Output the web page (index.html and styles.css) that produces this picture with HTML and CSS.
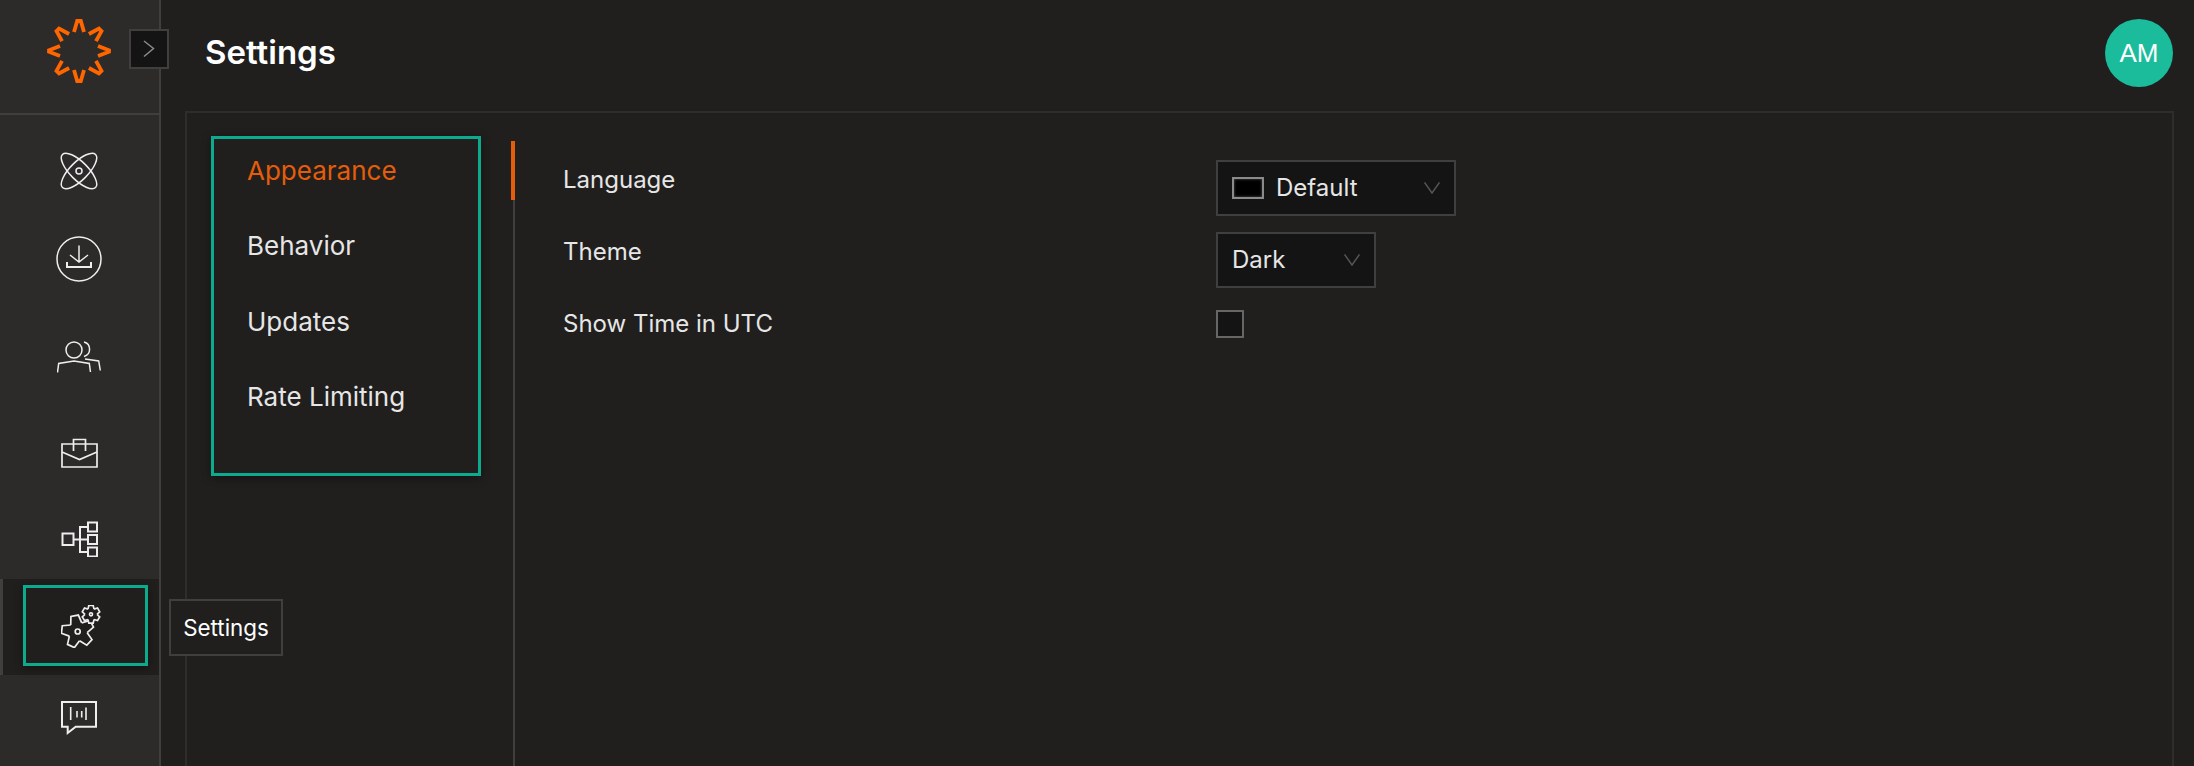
FILE: index.html
```html
<!DOCTYPE html>
<html lang="en">
<head>
<meta charset="utf-8">
<title>Settings</title>
<link rel="stylesheet" href="styles.css">
</head>
<body>
<div class="app">
  <aside class="rail">
    <div class="rail-top">
      <svg class="logo" width="64" height="64" viewBox="-32 -32 64 64" fill="none" stroke="#ff6600" stroke-width="3.8" stroke-linejoin="miter">
        <path d="M-5 -19 L-1.800 -30 L1.800 -30 L5 -19"/>
        <path d="M-5 -19 L-1.800 -30 L1.800 -30 L5 -19" transform="rotate(45)"/>
        <path d="M-5 -19 L-0.800 -30 L0.800 -30 L5 -19" transform="rotate(90)"/>
        <path d="M-5 -19 L-1.800 -30 L1.800 -30 L5 -19" transform="rotate(135)"/>
        <path d="M-5 -19 L-1.800 -30 L1.800 -30 L5 -19" transform="rotate(180)"/>
        <path d="M-5 -19 L-1.800 -30 L1.800 -30 L5 -19" transform="rotate(225)"/>
        <path d="M-5 -19 L-0.800 -30 L0.800 -30 L5 -19" transform="rotate(270)"/>
        <path d="M-5 -19 L-1.800 -30 L1.800 -30 L5 -19" transform="rotate(315)"/>
      </svg>
    </div>
    <nav class="rail-nav">
      <div class="rail-item item-atom">
        <svg class="icon" width="38" height="38" viewBox="-19 -19 38 38" fill="none" stroke="#eeeeee" stroke-width="1.500">
          <ellipse rx="9" ry="23.400" transform="rotate(45)"/>
          <ellipse rx="9" ry="23.400" transform="rotate(-45)"/>
          <circle r="3"/>
        </svg>
      </div>
      <div class="rail-item item-download">
        <svg class="icon" width="46" height="46" viewBox="0 0 46 46" fill="none" stroke="#eeeeee" stroke-width="1.500">
          <circle cx="23" cy="23" r="22"/>
          <path d="M23 9.500V26M14 19L23 26L32 19"/>
          <path d="M11 26V31H35V26" stroke-width="2"/>
        </svg>
      </div>
      <div class="rail-item item-people">
        <svg class="icon" width="44" height="32" viewBox="0 0 44 32" fill="none" stroke="#eeeeee" stroke-width="1.500">
          <circle cx="17" cy="9" r="8"/>
          <path d="M27 1A7.500 7.500 0 0 1 27 15.500"/>
          <path d="M.5 31.500L1.700 22.500L17 20L32.300 22.500L33.500 31"/>
          <path d="M28 18L41.700 20L43.300 29.500"/>
        </svg>
      </div>
      <div class="rail-item item-case">
        <svg class="icon" width="37" height="30" viewBox="0 0 37 30" fill="none" stroke="#eeeeee" stroke-width="1.700">
          <path d="M1 6H36V29H1Z"/>
          <path d="M1 14L18.500 21.500L36 14"/>
          <path d="M12.500 13V1.500H24.500V13"/>
        </svg>
      </div>
      <div class="rail-item item-tree">
        <svg class="icon" width="37" height="36" viewBox="0 0 37 36" fill="none" stroke="#eeeeee" stroke-width="2">
          <rect x="1.500" y="12.500" width="11" height="11.500"/>
          <rect x="27" y="1.500" width="9" height="9"/>
          <rect x="27" y="14" width="9" height="9"/>
          <rect x="27" y="26.500" width="9" height="9"/>
          <path d="M12.500 18.500H27M19 6H27M19 31H27M19 5V32"/>
        </svg>
      </div>
      <div class="rail-active">
        <div class="focus-box">
          <svg class="icon" width="40" height="43" viewBox="0 0 40 43" fill="#201f1e" stroke="#eeeeee" stroke-width="1.700" stroke-linejoin="miter">
            <g transform="translate(16.700 26.500) rotate(-11)">
              <circle r="9" stroke="none"/>
              <path d="M-5.600 -7.700L-3.800 -16L3.800 -16L5.600 -7.700"/>
              <path d="M-5.600 -7.700L-3.800 -16L3.800 -16L5.600 -7.700" transform="rotate(72)"/>
              <path d="M-5.600 -7.700L-3.800 -16L3.800 -16L5.600 -7.700" transform="rotate(144)"/>
              <path d="M-5.600 -7.700L-3.800 -16L3.800 -16L5.600 -7.700" transform="rotate(216)"/>
              <path d="M-5.600 -7.700L-3.800 -16L3.800 -16L5.600 -7.700" transform="rotate(288)"/>
            </g>
            <circle cx="16.700" cy="26.500" r="2.500" fill="none"/>
            <g transform="translate(30 9.300)">
              <circle r="6" stroke="none"/>
              <path d="M-3 -5.200L-2.200 -8.800L2.200 -8.800L3 -5.200"/>
              <path d="M-3 -5.200L-2.200 -8.800L2.200 -8.800L3 -5.200" transform="rotate(60)"/>
              <path d="M-3 -5.200L-2.200 -8.800L2.200 -8.800L3 -5.200" transform="rotate(120)"/>
              <path d="M-3 -5.200L-2.200 -8.800L2.200 -8.800L3 -5.200" transform="rotate(180)"/>
              <path d="M-3 -5.200L-2.200 -8.800L2.200 -8.800L3 -5.200" transform="rotate(240)"/>
              <path d="M-3 -5.200L-2.200 -8.800L2.200 -8.800L3 -5.200" transform="rotate(300)"/>
              <circle r="1.500"/>
            </g>
          </svg>
        </div>
      </div>
      <div class="rail-item item-feedback">
        <svg class="icon" width="38" height="36" viewBox="0 0 38 36" fill="none" stroke="#eeeeee" stroke-width="2">
          <path d="M2 2H36V26.700H15.700L7.700 33V26.700H2Z"/>
          <path d="M10.700 7V20M17 11V17.500M21.700 11V17.500M26 7.500V20" stroke-width="1.600"/>
        </svg>
      </div>
    </nav>
  </aside>
  <button class="collapse" type="button" aria-label="Expand">
    <svg width="12" height="18" viewBox="0 0 12 18" fill="none" stroke="#8a8a8a" stroke-width="1.500"><path d="M1 1L10.500 8.500L1 16.500"/></svg>
  </button>
  <div class="tooltip">Settings</div>
  <main class="main">
    <header class="topbar">
      <h1 class="title">Settings</h1>
      <div class="avatar">AM</div>
    </header>
    <section class="panel">
      <div class="tabs">
        <div class="tab tab-on">Appearance</div>
        <div class="tab">Behavior</div>
        <div class="tab">Updates</div>
        <div class="tab">Rate Limiting</div>
      </div>
      <div class="content">
        <div class="marker"></div>
        <div class="rows">
          <div class="row">
            <div class="label">Language</div>
            <div class="select select-wide">
              <span class="flag"></span><span class="select-text">Default</span>
              <svg class="chev" width="16" height="12" viewBox="0 0 16 12" fill="none" stroke="#555" stroke-width="1.500"><path d="M.5 .5L8 11L15.500 .5"/></svg>
            </div>
          </div>
          <div class="row">
            <div class="label">Theme</div>
            <div class="select select-narrow">
              <span class="select-text">Dark</span>
              <svg class="chev" width="16" height="12" viewBox="0 0 16 12" fill="none" stroke="#555" stroke-width="1.500"><path d="M.5 .5L8 11L15.500 .5"/></svg>
            </div>
          </div>
          <div class="row">
            <div class="label">Show Time in UTC</div>
            <div class="check"></div>
          </div>
        </div>
      </div>
    </section>
  </main>
</div>
</body>
</html>
```
FILE: styles.css
```css
* { box-sizing: border-box; }
html, body { margin: 0; height: 100%; overflow: hidden; background: #201f1e; }
body { font-family: Inter, "Noto Sans", sans-serif; color: #e6e6e6; }
.app { position: relative; display: flex; height: 766px; }

.rail { width: 161px; flex: none; background: #2d2b2a; border-right: 2px solid #403f3e; display: flex; flex-direction: column; }
.rail-top { height: 115px; border-bottom: 2px solid #403f3e; display: flex; align-items: center; justify-content: center; padding: 0 1px 11px 0; }
.logo { display: block; }
.rail-nav { display: flex; flex-direction: column; }
.rail-item { display: flex; justify-content: center; padding-right: 1px; }
.icon { display: block; }
.item-atom { margin-top: 37px; }
.item-download { margin-top: 46px; }
.item-people { margin-top: 59px; }
.item-case { margin-top: 65px; }
.item-tree { margin-top: 53px; }
.rail-active { height: 96px; margin-top: 22px; background: #201f1e; border-left: 3px solid #403f3e; padding: 6px 0 0 20px; }
.item-feedback { margin-top: 25px; }
.focus-box { width: 125px; height: 81px; border: 3px solid #0cab8e; padding: 17px 0 0 35px; box-shadow: 0 2px 8px rgba(0,0,0,.4); }

.collapse { position: absolute; left: 129px; top: 29px; width: 40px; height: 40px; padding: 0; background: #141414; border: 2px solid #403f3e; display: flex; align-items: center; justify-content: center; }
.tooltip { position: absolute; left: 169px; top: 599px; width: 114px; height: 57px; background: #201f1e; border: 2px solid #403f3e; font-size: 22.400px; color: #fff; display: flex; align-items: center; justify-content: center; }

.main { flex: 1; min-width: 0; display: flex; flex-direction: column; padding: 0 20px 0 24px; }
.topbar { height: 111px; display: flex; align-items: flex-start; justify-content: space-between; }
.title { margin: 33px 0 0 20px; font-size: 33px; line-height: 38px; font-weight: 600; color: #fff; }
.avatar { width: 68px; height: 68px; margin: 19px 1px 0 0; border-radius: 50%; background: #1abc9c; color: #fff; font-family: "Liberation Sans", Arial, sans-serif; font-size: 26px; display: flex; align-items: center; justify-content: center; }

.panel { flex: 1; border: 2px solid #2e2d2c; border-bottom: 0; display: flex; padding: 23px 0 0 24px; }
.tabs { width: 270px; height: 340px; border: 3px solid #0cab8e; flex: none; padding: 1px 0 0 33px; display: flex; flex-direction: column; gap: 13.300px; box-shadow: 0 2px 8px rgba(0,0,0,.4); }
.tab { height: 62px; font-size: 26px; line-height: 62px; color: #e6e6e6; }
.tab-on { color: #e35d0a; }

.content { position: relative; flex: 1; margin-left: 32px; margin-top: 5px; border-left: 2px solid #403f3e; padding: 19px 0 0 48px; }
.marker { position: absolute; left: -4px; top: 0; width: 4px; height: 59px; background: #e35d0a; }
.rows { display: flex; flex-direction: column; }
.row { display: flex; align-items: flex-start; height: 72px; font-size: 24px; line-height: 40px; }
.label { width: 653px; }
.select { height: 56px; background: #141414; border: 2px solid #403f3e; display: flex; align-items: center; padding-left: 14px; }
.select-wide { width: 240px; }
.select-narrow { width: 160px; }
.flag { width: 32px; height: 22px; background: #000; border: 2px solid #8a8a8a; box-shadow: inset 0 0 3px #555; margin-right: 12px; }
.select-text { flex: 1; }
.chev { margin-right: 14px; }
.check { width: 28px; height: 28px; margin-top: 6px; background: #141414; border: 2px solid #666; }
```
